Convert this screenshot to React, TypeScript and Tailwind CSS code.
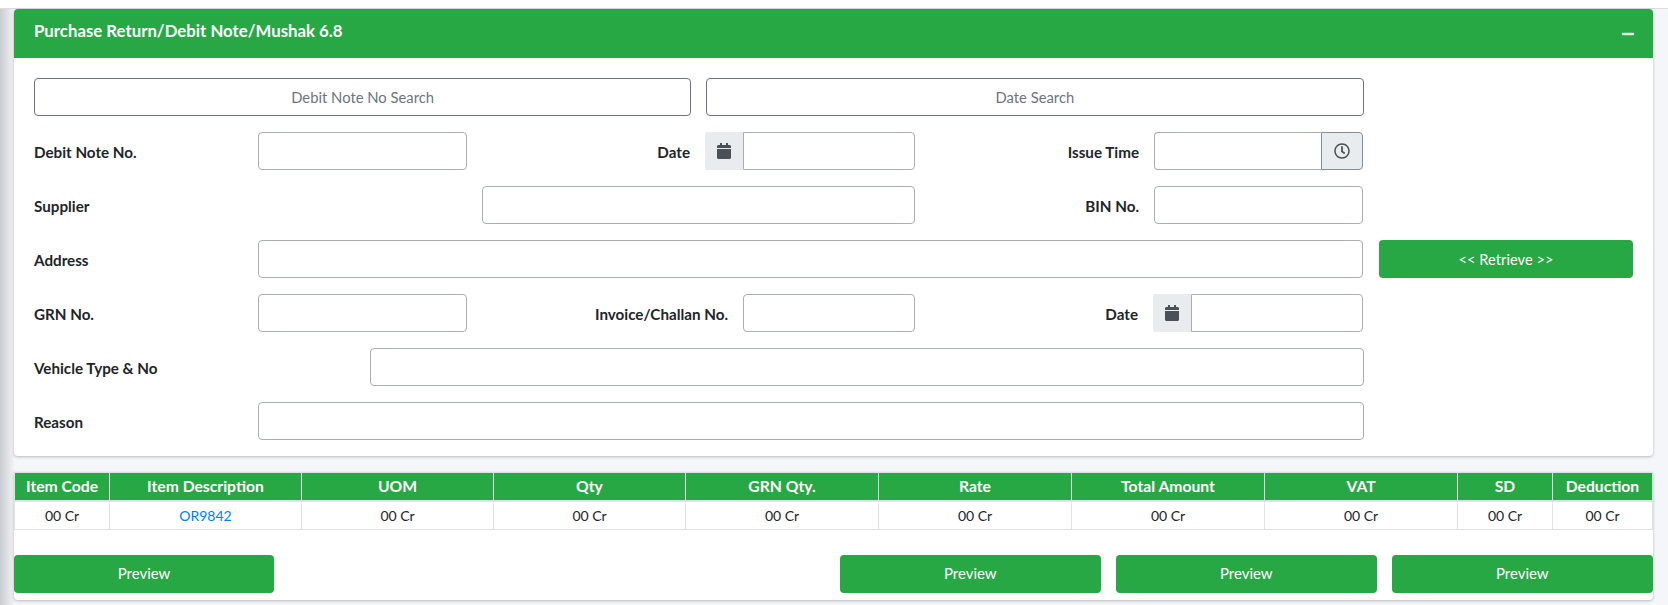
import React from 'react';
import { FaCalendar, FaMinus, FaRegClock } from 'react-icons/fa';

const inputCls = 'h-[38px] border border-[#a9aeb4] rounded-[4px] bg-white';
const labelCls = 'text-[15.2px] font-bold text-[#212529] pt-[2px]';

function Label({ children, className = '' }: { children: React.ReactNode; className?: string }) {
  return <div className={`${labelCls} ${className}`}>{children}</div>;
}

function DateField({ className = '' }: { className?: string }) {
  return (
    <div className={`flex h-[38px] ${className}`}>
      <div className="w-[38px] shrink-0 bg-[#e9ecef] flex items-center justify-center text-[#495057] rounded-l-[2px]">
        <FaCalendar size={16} />
      </div>
      <div className="flex-1 border border-[#a9aeb4] rounded-r-[4px] bg-white" />
    </div>
  );
}

const columns = [
  { name: 'Item Code', width: 'w-[95px]' },
  { name: 'Item Description', width: 'w-[192px]' },
  { name: 'UOM', width: 'w-[192px]' },
  { name: 'Qty', width: 'w-[192px]' },
  { name: 'GRN Qty.', width: 'w-[193px]' },
  { name: 'Rate', width: 'w-[193px]' },
  { name: 'Total Amount', width: 'w-[193px]' },
  { name: 'VAT', width: 'w-[193px]' },
  { name: 'SD', width: 'w-[95px]' },
  { name: 'Deduction', width: 'flex-1' },
];

function PreviewButton({ wide = false }: { wide?: boolean }) {
  return (
    <button className={`${wide ? 'w-[260.5px]' : 'w-[260px]'} h-[38px] rounded-[4px] bg-[#28a745] text-white text-[15px]`}>
      Preview
    </button>
  );
}

export default function App() {
  return (
    <div className="w-[1668px] h-[605px] overflow-hidden bg-[#f4f6f9] flex flex-col font-['Lato',sans-serif]">
      <div className="h-[9px] shrink-0 bg-white border-b border-[#d8dcdf]" />
      <div className="flex flex-1">
        {/* sidebar shadow */}
        <div className="w-[14px] shrink-0 bg-gradient-to-r from-[#c9ccd1] to-[#f2f3f6]" />
        <div className="w-[1639px]">
          {/* form card */}
          <div className="bg-white rounded-[4px] shadow-[0_1px_3px_rgba(0,0,0,0.25)] h-[447px]">
            <div className="h-[48.5px] bg-[#28a745] rounded-t-[4px] flex items-center justify-between pl-[20px] pr-[18px]">
              <span className="text-white font-bold text-[16.8px] pb-[5px]">Purchase Return/Debit Note/Mushak 6.8</span>
              <FaMinus size={14} className="text-[#dff0e3] mt-[1px]" />
            </div>
            <div className="pt-[20.5px] pl-[20px] flex flex-col gap-[16px]">
              <div className="flex gap-[15px] w-[1329.5px]">
                <div className="flex-1 h-[38px] border border-[#6c757d] rounded-[4px] flex items-center justify-center text-[14.8px] text-[#6c757d]">
                  Debit Note No Search
                </div>
                <div className="flex-1 h-[38px] border border-[#6c757d] rounded-[4px] flex items-center justify-center text-[14.8px] text-[#6c757d]">
                  Date Search
                </div>
              </div>

              <div className="flex items-center w-[1329px]">
                <Label className="w-[224px]">Debit Note No.</Label>
                <div className={`${inputCls} w-[208.5px]`} />
                <Label className="w-[238.5px] text-right pr-[15px]">Date</Label>
                <DateField className="w-[209.5px]" />
                <Label className="w-[239.5px] text-right pr-[15px]">Issue Time</Label>
                <div className="flex h-[38px] flex-1">
                  <div className="flex-1 border border-r-0 border-[#a9aeb4] rounded-l-[4px]" />
                  <div className="w-[42px] border border-[#868e96] rounded-r-[4px] bg-[#e9ecef] flex items-center justify-center text-[#495057]">
                    <FaRegClock size={16} />
                  </div>
                </div>
              </div>

              <div className="flex items-center w-[1329px]">
                <Label className="w-[448px]">Supplier</Label>
                <div className={`${inputCls} w-[432.5px]`} />
                <Label className="w-[239.5px] text-right pr-[15px]">BIN No.</Label>
                <div className={`${inputCls} flex-1`} />
              </div>

              <div className="flex items-center">
                <div className="flex items-center w-[1329px]">
                  <Label className="w-[224px]">Address</Label>
                  <div className={`${inputCls} flex-1`} />
                </div>
                <button className="ml-[16px] w-[254px] h-[38px] rounded-[4px] bg-[#28a745] text-white text-[14.7px]">
                  {'<< Retrieve >>'}
                </button>
              </div>

              <div className="flex items-center w-[1329px]">
                <Label className="w-[224px]">GRN No.</Label>
                <div className={`${inputCls} w-[208.5px]`} />
                <Label className="w-[276.5px] text-right pr-[15px]">Invoice/Challan No.</Label>
                <div className={`${inputCls} w-[171.5px]`} />
                <Label className="w-[238.5px] text-right pr-[15px]">Date</Label>
                <DateField className="flex-1" />
              </div>

              <div className="flex items-center w-[1330px]">
                <Label className="w-[336px]">Vehicle Type &amp; No</Label>
                <div className={`${inputCls} flex-1`} />
              </div>

              <div className="flex items-center w-[1330px]">
                <Label className="w-[224px]">Reason</Label>
                <div className={`${inputCls} flex-1`} />
              </div>
            </div>
          </div>

          {/* items card */}
          <div className="mt-[16px] bg-white rounded-b-[4px] shadow-[0_1px_3px_rgba(0,0,0,0.25)] h-[128px]">
            <div className="flex h-[29.5px] bg-[#28a745] border border-b-2 border-[#dee2e6]">
              {columns.map(col => (
                <div
                  key={col.name}
                  className={`${col.width} border-r border-[#dee2e6] last:border-r-0 flex items-center justify-center pt-[2px] text-white font-bold text-[15.7px]`}
                >
                  {col.name}
                </div>
              ))}
            </div>
            <div className="flex h-[28.5px] border-x border-b border-[#dee2e6]">
              {columns.map((col, i) => (
                <div
                  key={col.name}
                  className={`${col.width} border-r border-[#dee2e6] last:border-r-0 flex items-center justify-center text-[14px] ${i === 1 ? 'text-[#007bff]' : 'text-[#212529]'}`}
                >
                  {i === 1 ? 'OR9842' : '00 Cr'}
                </div>
              ))}
            </div>
            <div className="flex mt-[24.5px] pr-[0.5px]">
              <PreviewButton />
              <div className="ml-auto flex gap-[15.5px]">
                <PreviewButton wide />
                <PreviewButton wide />
                <PreviewButton wide />
              </div>
            </div>
          </div>
        </div>
      </div>
    </div>
  );
}
